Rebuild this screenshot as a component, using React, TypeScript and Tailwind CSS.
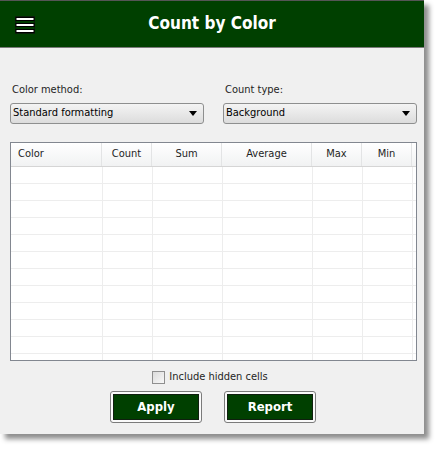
import { useState } from 'react';

const font = { fontFamily: '"DejaVu Sans Condensed", "DejaVu Sans", Tahoma, sans-serif' };

const columns = [
    { label: 'Color', center: false },
    { label: 'Count', center: true },
    { label: 'Sum', center: true },
    { label: 'Average', center: true },
    { label: 'Max', center: true },
    { label: 'Min', center: true },
];

function Hamburger() {
    return (
        <svg width="20" height="18" viewBox="0 0 20 18" className="block">
            <rect x="0" y="0" width="20" height="18" fill="#0b1f0b" />
            <rect x="1" y="1" width="18" height="16" fill="#003a00" />
            <rect x="0.5" y="1" width="19" height="4" fill="#000" />
            <rect x="0.5" y="7" width="19" height="4" fill="#000" />
            <rect x="0.5" y="13" width="19" height="4" fill="#000" />
            <rect x="1.5" y="2" width="17" height="2" fill="#fff" />
            <rect x="1.5" y="8" width="17" height="2" fill="#fff" />
            <rect x="1.5" y="14" width="17" height="2" fill="#fff" />
        </svg>
    );
}

function Dropdown({ value }: { value: string }) {
    return (
        <div className="flex h-[21px] w-[194px] items-center justify-between rounded-[3px] border border-[#8e8f8f] bg-gradient-to-b from-[#f4f4f4] to-[#dcdcdc] pl-[2px] pr-[6px] text-[11px] text-black">
            <span>{value}</span>
            <svg width="8" height="5" viewBox="0 0 8 5"><path d="M0 0h8L4 5z" fill="#000" /></svg>
        </div>
    );
}

function GreenButton({ label }: { label: string }) {
    return (
        <button className="h-[32px] w-[92px] rounded-[3px] border border-[#7b7b7b] bg-[#fafafa] p-[2px]">
            <div className="flex h-full w-full items-center justify-center border border-[#0f1f0f] bg-[#004000] text-[13px] font-bold text-white">
                {label}
            </div>
        </button>
    );
}

export default function App() {
    const [hidden, setHidden] = useState(false);
    const rows = Array.from({ length: 12 });

    return (
        <div className="h-[449px] w-[439px] bg-white" style={font}>
            <div className="flex h-[434px] w-[424px] flex-col bg-[#f0f0f0] shadow-[5px_5px_5px_rgba(0,0,0,0.45)]">
                <div className="relative flex h-[48px] items-center justify-center border-t border-b border-t-[#555] border-b-[#7a7a7a] bg-[#004000]">
                    <div className="absolute left-[15px] top-[15px]"><Hamburger /></div>
                    <h1 className="text-[17px] font-bold text-white">Count by Color</h1>
                </div>

                <div className="flex flex-col px-[10px]">
                    <div className="mt-[35px] flex gap-[19px]">
                        <div className="flex flex-col gap-[6px]">
                            <label className="pl-[2px] text-[11px] leading-[14px] text-[#1e1e1e]">Color method:</label>
                            <Dropdown value="Standard formatting" />
                        </div>
                        <div className="flex flex-col gap-[6px]">
                            <label className="pl-[2px] text-[11px] leading-[14px] text-[#1e1e1e]">Count type:</label>
                            <Dropdown value="Background" />
                        </div>
                    </div>

                    <div className="mt-[18px] h-[219px] w-[407px] overflow-hidden border border-[#828790] bg-white">
                        <div className="grid h-[24px] grid-cols-[91px_50px_70px_90px_50px_50px] border-b border-[#d5d5d5] bg-gradient-to-b from-white to-[#f1f2f3] text-[11px] text-[#1e1e1e]">
                            {columns.map((c) => (
                                <div key={c.label} className={`flex h-full items-center border-r border-[#e3e4e5] ${c.center ? 'justify-center' : 'pl-[7px]'}`}>
                                    {c.label}
                                </div>
                            ))}
                        </div>
                        {rows.map((_, i) => (
                            <div key={i} className="grid h-[17px] grid-cols-[92px_50px_70px_90px_50px_50px] border-b border-[#ededed]">
                                {columns.map((c) => (
                                    <div key={c.label} className="border-r border-[#ededed]" />
                                ))}
                            </div>
                        ))}
                    </div>

                    <label className="mt-[9px] flex h-[14px] items-center justify-center gap-[4px] pr-[4px] text-[11px] leading-[14px] text-[#1e1e1e]">
                        <span
                            onClick={() => setHidden(!hidden)}
                            className="flex h-[13px] w-[13px] items-center justify-center border border-[#8f8f8f] bg-gradient-to-br from-[#dcdcdc] to-[#f8f8f8]"
                        >
                            {hidden && <span className="text-[10px] leading-none">✓</span>}
                        </span>
                        Include hidden cells
                    </label>

                    <div className="mt-[7px] flex justify-center gap-[22px] pl-[2px]">
                        <GreenButton label="Apply" />
                        <GreenButton label="Report" />
                    </div>
                </div>
            </div>
        </div>
    );
}
